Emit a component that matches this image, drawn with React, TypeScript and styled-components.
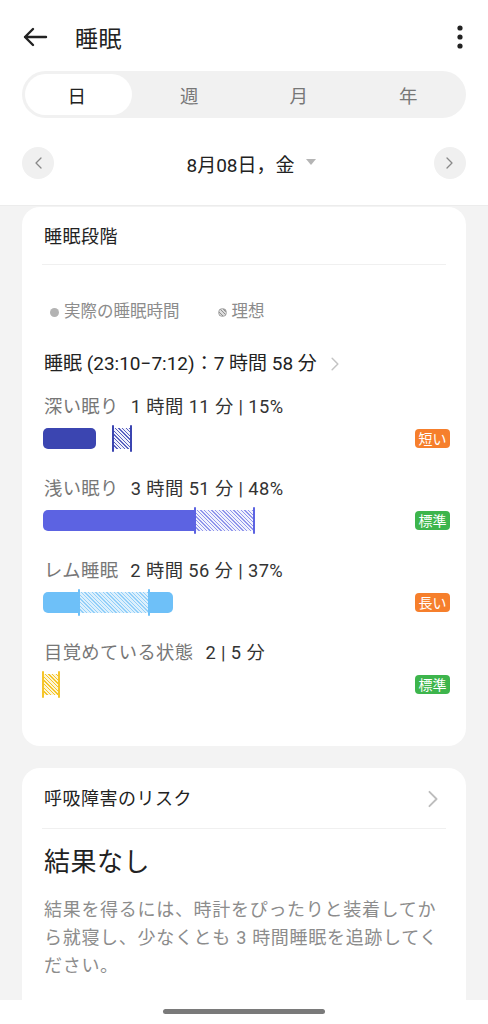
import React from 'react';
import styled, { createGlobalStyle, css } from 'styled-components';

const GlobalStyle = createGlobalStyle`
  html, body {
    margin: 0;
    padding: 0;
    height: 100%;
    overflow: hidden;
    background: #f3f3f3;
    font-family: Roboto, "Noto Sans CJK JP", "Noto Sans", sans-serif;
    color: #222;
  }
  * { box-sizing: border-box; }
`;

const Page = styled.div`
  width: 488px;
  min-height: 1024px;
  background: #f3f3f3;
`;

const Header = styled.header`
  background: #fff;
  padding: 3px 22px 26px;
  border-bottom: 1px solid #ececec;
`;

const TopBar = styled.div`
  height: 67px;
  display: flex;
  align-items: center;
`;

const IconButton = styled.button`
  background: none;
  border: none;
  padding: 0;
  display: flex;
  align-items: center;
  justify-content: center;
  color: #222;
`;

const Title = styled.h1`
  margin: 0 0 0 27px;
  flex: 1;
  font-size: 23px;
  font-weight: 400;
  letter-spacing: 0.5px;
`;

const Segmented = styled.div`
  margin-top: 1px;
  height: 47px;
  padding: 3px;
  border-radius: 24px;
  background: #f1f1f1;
  display: grid;
  grid-template-columns: repeat(4, 1fr);
`;

const Segment = styled.div<{ $active?: boolean }>`
  border-radius: 21px;
  display: flex;
  align-items: center;
  justify-content: center;
  font-size: 18.5px;
  color: ${p => (p.$active ? '#222' : '#777')};
  background: ${p => (p.$active ? '#fff' : 'transparent')};
  margin-right: ${p => (p.$active ? '3px' : '0')};
  padding-right: ${p => (p.$active ? '3px' : '0')};
`;

const DateRow = styled.div`
  margin-top: 29px;
  height: 32px;
  display: flex;
  align-items: center;
  justify-content: space-between;
`;

const RoundButton = styled.div`
  width: 32px;
  height: 32px;
  border-radius: 50%;
  background: #f0f0f0;
  display: flex;
  align-items: center;
  justify-content: center;
`;

const DateLabel = styled.div`
  display: flex;
  align-items: center;
  gap: 11px;
  font-size: 19px;
  color: #222;
  margin-left: 14px;
`;

const Caret = styled.span`
  width: 0;
  height: 0;
  border-left: 5px solid transparent;
  border-right: 5px solid transparent;
  border-top: 6px solid #b5b5b5;
  margin-top: -2px;
`;

const Cards = styled.main`
  padding: 1px 22px 0;
  display: flex;
  flex-direction: column;
  gap: 22px;
`;

const Card = styled.section<{ $bottom?: number }>`
  background: #fff;
  border-radius: 18px;
  padding: 0 16px ${p => p.$bottom ?? 0}px 22px;
`;

const CardTitleRow = styled.div`
  display: flex;
  align-items: center;
  justify-content: space-between;
  padding: 18px 0 15px;
  font-size: 18px;
  line-height: 24px;
  letter-spacing: 0.5px;
  color: #222;
`;

const Divider = styled.div`
  height: 1px;
  background: #f0f0f0;
  margin: 0 4px 0 -2px;
`;

const Legend = styled.div`
  margin-top: 36px;
  display: flex;
  align-items: center;
  gap: 38px;
  font-size: 16.5px;
  line-height: 22px;
  color: #8c8c8c;
  padding-left: 6px;
`;

const LegendItem = styled.div`
  display: flex;
  align-items: center;
  gap: 5px;
`;

const Dot = styled.span<{ $hatched?: boolean }>`
  width: 9px;
  height: 9px;
  border-radius: 50%;
  background: ${p =>
    p.$hatched
      ? 'repeating-linear-gradient(45deg, #8f8f8f 0 1px, #dcdcdc 1px 2.5px)'
      : '#b3b3b3'};
  border: ${p => (p.$hatched ? '1px solid #a8a8a8' : 'none')};
`;

const Summary = styled.div`
  margin-top: 28px;
  display: flex;
  align-items: center;
  gap: 14px;
  font-size: 19px;
  line-height: 26px;
  color: #222;
`;

const Stage = styled.div`
  margin-top: 18px;
  & + & {
    margin-top: 25px;
  }
`;

const StageLabel = styled.div`
  font-size: 18.3px;
  line-height: 24px;
  color: #777;
  letter-spacing: 0.4px;
  span {
    color: #333;
    margin-left: 12px;
  }
`;

const BarRow = styled.div`
  margin-top: 5px;
  height: 28px;
  display: flex;
  align-items: center;
  justify-content: space-between;
`;

const Track = styled.div`
  display: flex;
  align-items: center;
  height: 21px;
  margin-left: -1px;
`;

type Round = 'left' | 'right' | 'both' | 'none';

const radiusFor = (r: Round) => {
  switch (r) {
    case 'left':
      return '5px 0 0 5px';
    case 'right':
      return '0 5px 5px 0';
    case 'both':
      return '5px';
    default:
      return '0';
  }
};

const Solid = styled.div<{ $color: string; $round: Round }>`
  height: 21px;
  background: ${p => p.$color};
  border-radius: ${p => radiusFor(p.$round)};
`;

const Hatch = styled.div<{ $color: string; $tint: string; $edge: string }>`
  position: relative;
  height: 21px;
  background: repeating-linear-gradient(
    45deg,
    ${p => p.$color} 0 1px,
    ${p => p.$tint} 1px 2.6px
  );
  ${p => css`
    &::before,
    &::after {
      content: '';
      position: absolute;
      top: -3px;
      bottom: -3px;
      width: 2px;
      border-radius: 1px;
      background: ${p.$edge};
    }
  `}
  &::before { left: -1px; }
  &::after { right: -1px; }
`;

const Gap = styled.div``;

const Badge = styled.div<{ $tone: 'orange' | 'green' }>`
  height: 19px;
  padding: 0 3.5px;
  border-radius: 4px;
  display: flex;
  align-items: center;
  font-size: 14px;
  color: #fff;
  background: ${p => (p.$tone === 'orange' ? '#f67f2c' : '#3db54c')};
`;

const ResultTitle = styled.div`
  margin-top: 15px;
  font-size: 26px;
  line-height: 36px;
  color: #222;
  letter-spacing: 0.5px;
`;

const Paragraph = styled.p`
  margin: 16px 0 0;
  font-size: 18px;
  line-height: 28px;
  letter-spacing: 0.7px;
  color: #8c8c8c;
`;

const GestureArea = styled.div`
  position: fixed;
  left: 0;
  right: 0;
  bottom: 0;
  height: 24px;
  background: #fff;
  display: flex;
  justify-content: center;
  padding-top: 9px;
`;

const Handle = styled.div`
  width: 162px;
  height: 5px;
  border-radius: 3px;
  background: #7a7a7a;
`;

type Seg =
  | { kind: 'solid'; width: number; color: string; round: Round }
  | { kind: 'hatch'; width: number; color: string; tint: string; edge: string }
  | { kind: 'gap'; width: number };

type StageData = {
  name: string;
  value: string;
  badge: string;
  tone: 'orange' | 'green';
  segments: Seg[];
};

const DEEP = '#3b45b1';
const LIGHT = '#5c63e2';
const REM = '#6ec0f8';
const AWAKE = '#f5c52a';

const stages: StageData[] = [
  {
    name: '深い眠り',
    value: '1 時間 11 分 | 15%',
    badge: '短い',
    tone: 'orange',
    segments: [
      { kind: 'solid', width: 53, color: DEEP, round: 'both' },
      { kind: 'gap', width: 17 },
      { kind: 'hatch', width: 18, color: '#5a62c0', tint: '#f0f1fb', edge: DEEP },
    ],
  },
  {
    name: '浅い眠り',
    value: '3 時間 51 分 | 48%',
    badge: '標準',
    tone: 'green',
    segments: [
      { kind: 'solid', width: 152, color: LIGHT, round: 'left' },
      { kind: 'hatch', width: 59, color: '#9196ec', tint: '#f1f2fd', edge: LIGHT },
    ],
  },
  {
    name: 'レム睡眠',
    value: '2 時間 56 分 | 37%',
    badge: '長い',
    tone: 'orange',
    segments: [
      { kind: 'solid', width: 36, color: REM, round: 'left' },
      { kind: 'hatch', width: 70, color: '#92cff9', tint: '#dcf0fd', edge: REM },
      { kind: 'solid', width: 24, color: REM, round: 'right' },
    ],
  },
  {
    name: '目覚めている状態',
    value: '2 | 5 分',
    badge: '標準',
    tone: 'green',
    segments: [{ kind: 'hatch', width: 16, color: AWAKE, tint: '#fdf5d6', edge: AWAKE }],
  },
];

const BackArrow = () => (
  <svg width="26" height="22" viewBox="0 0 26 22" fill="none">
    <path d="M24 11H3M11 3L3 11l8 8" stroke="#222" strokeWidth="2.4" strokeLinecap="round" strokeLinejoin="round" />
  </svg>
);

const Kebab = () => (
  <svg width="8" height="24" viewBox="0 0 8 24">
    <circle cx="4" cy="3" r="2.6" fill="#222" />
    <circle cx="4" cy="12" r="2.6" fill="#222" />
    <circle cx="4" cy="21" r="2.6" fill="#222" />
  </svg>
);

const Chevron = ({ dir = 'right', color = '#888', w = 7, h = 12 }: { dir?: 'left' | 'right'; color?: string; w?: number; h?: number }) => (
  <svg width={w} height={h} viewBox="0 0 7 12" fill="none">
    <path
      d={dir === 'right' ? 'M1 1l5 5-5 5' : 'M6 1L1 6l5 5'}
      stroke={color}
      strokeWidth="1.3"
      strokeLinecap="round"
      strokeLinejoin="round"
    />
  </svg>
);

const App: React.FC = () => {
  return (
    <Page>
      <GlobalStyle />
      <Header>
        <TopBar>
          <IconButton aria-label="戻る"><BackArrow /></IconButton>
          <Title>睡眠</Title>
          <IconButton aria-label="メニュー" style={{ marginRight: 2 }}><Kebab /></IconButton>
        </TopBar>
        <Segmented>
          <Segment $active>日</Segment>
          <Segment>週</Segment>
          <Segment>月</Segment>
          <Segment>年</Segment>
        </Segmented>
        <DateRow>
          <RoundButton><Chevron dir="left" /></RoundButton>
          <DateLabel>
            8月08日，金
            <Caret />
          </DateLabel>
          <RoundButton><Chevron dir="right" /></RoundButton>
        </DateRow>
      </Header>

      <Cards>
        <Card $bottom={48}>
          <CardTitleRow>睡眠段階</CardTitleRow>
          <Divider />
          <Legend>
            <LegendItem><Dot />実際の睡眠時間</LegendItem>
            <LegendItem><Dot $hatched />理想</LegendItem>
          </Legend>
          <Summary>
            睡眠 (23:10−7:12)：7 時間 58 分
            <Chevron color="#c4c4c4" w={8} h={14} />
          </Summary>
          {stages.map(s => (
            <Stage key={s.name}>
              <StageLabel>
                {s.name}
                <span>{s.value}</span>
              </StageLabel>
              <BarRow>
                <Track>
                  {s.segments.map((seg, i) => {
                    if (seg.kind === 'solid')
                      return <Solid key={i} $color={seg.color} $round={seg.round} style={{ width: seg.width }} />;
                    if (seg.kind === 'hatch')
                      return <Hatch key={i} $color={seg.color} $tint={seg.tint} $edge={seg.edge} style={{ width: seg.width }} />;
                    return <Gap key={i} style={{ width: seg.width }} />;
                  })}
                </Track>
                <Badge $tone={s.tone}>{s.badge}</Badge>
              </BarRow>
            </Stage>
          ))}
        </Card>

        <Card $bottom={60}>
          <CardTitleRow style={{ paddingTop: 19, paddingBottom: 17 }}>
            呼吸障害のリスク
            <span style={{ marginRight: 12, display: 'flex' }}>
              <Chevron color="#bdbdbd" w={10} h={18} />
            </span>
          </CardTitleRow>
          <Divider />
          <ResultTitle>結果なし</ResultTitle>
          <Paragraph>
            結果を得るには、時計をぴったりと装着してから就寝し、少なくとも 3 時間睡眠を追跡してください。
          </Paragraph>
        </Card>
      </Cards>

      <GestureArea>
        <Handle />
      </GestureArea>
    </Page>
  );
};

export default App;
